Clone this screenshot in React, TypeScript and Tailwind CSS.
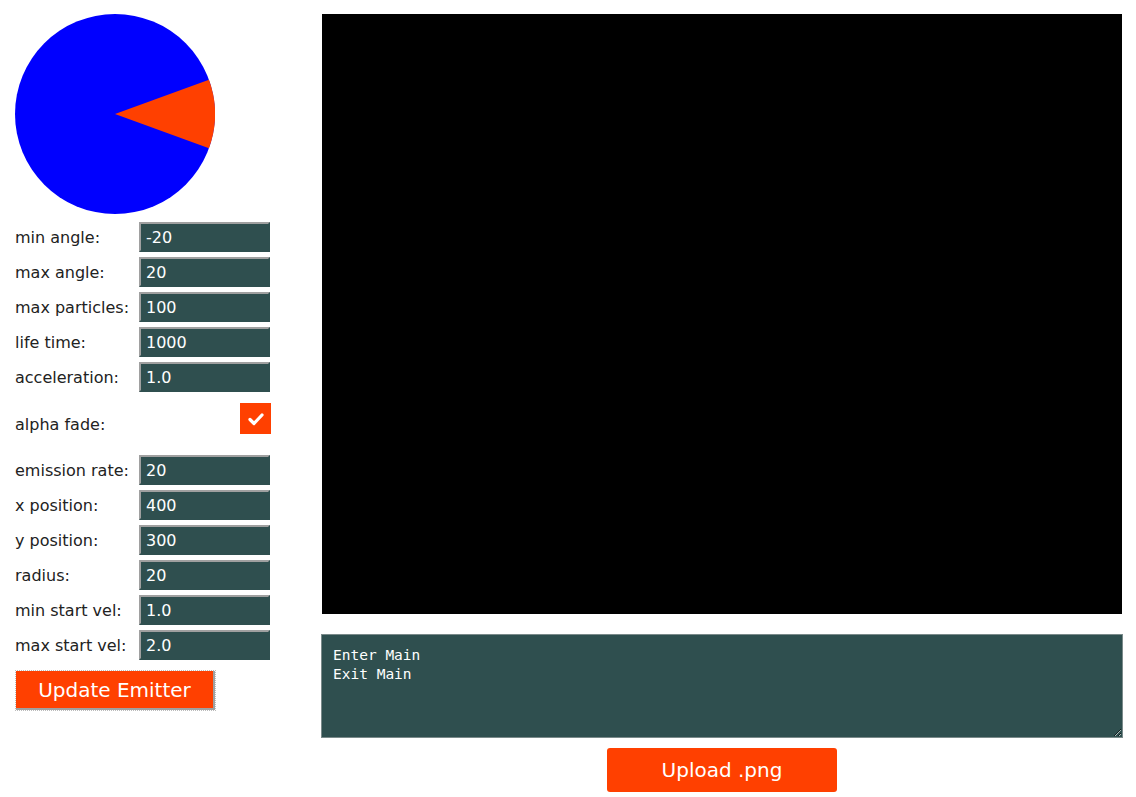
import React from 'react';

const font = { fontFamily: '"DejaVu Sans", Verdana, sans-serif' };

interface FieldProps {
  label: string;
  value: string;
}

function Field({ label, value }: FieldProps) {
  return (
    <div className="flex items-center h-[30px] mb-[5px]">
      <label className="w-[124px] pt-[2px] text-[16px] text-[#222]">{label}</label>
      <input
        className="w-[131px] h-[30px] pl-[5px] pt-px bg-[#2f4f4f] text-white text-[16px] border-2 border-t-[#a0a0a0] border-l-[#a0a0a0] border-r-[#2f4f4f] border-b-[#2f4f4f] outline-none"
        style={font}
        defaultValue={value}
      />
    </div>
  );
}

function Pie() {
  return (
    <svg width="200" height="200" viewBox="0 0 200 200">
      <circle cx="100" cy="100" r="100" fill="#0000ff" />
      <path d="M100 100 L193.97 65.8 A100 100 0 0 1 193.97 134.2 Z" fill="#ff4000" />
    </svg>
  );
}

export default function App() {
  return (
    <div className="flex pt-[14px] pl-[15px] bg-white min-h-[797px]" style={font}>
      <div className="w-[256px] flex flex-col">
        <Pie />
        <div className="mt-[8px]">
          <Field label="min angle:" value="-20" />
          <Field label="max angle:" value="20" />
          <Field label="max particles:" value="100" />
          <Field label="life time:" value="1000" />
          <Field label="acceleration:" value="1.0" />
          <div className="flex items-start mt-[11px] mb-[21px] h-[31px]">
            <label className="w-[225px] mt-[12px] text-[16px] leading-[20px] text-[#222]">alpha fade:</label>
            <div className="w-[31px] h-[31px] bg-[#ff4000] flex items-center justify-center">
              <svg width="16" height="14" viewBox="0 0 16 14">
                <path d="M2 7.5 L6 11.5 L14 3" stroke="white" strokeWidth="3.2" fill="none" strokeLinecap="round" strokeLinejoin="round" />
              </svg>
            </div>
          </div>
          <Field label="emission rate:" value="20" />
          <Field label="x position:" value="400" />
          <Field label="y position:" value="300" />
          <Field label="radius:" value="20" />
          <Field label="min start vel:" value="1.0" />
          <Field label="max start vel:" value="2.0" />
        </div>
        <button
          className="mt-[6px] ml-px w-[199px] h-[39px] bg-[#ff4000] text-white text-[20px] border-[#a0a0a0] border-r-2 border-b-2 outline-1 outline-dotted outline-[#bbb]"
          style={font}
        >
          Update Emitter
        </button>
      </div>
      <div className="ml-[50px] flex flex-col w-[802px]">
        <div className="ml-px w-[800px] h-[600px] bg-black" />
        <textarea
          className="mt-[20px] w-[802px] h-[104px] bg-[#2f4f4f] text-white border border-[#7a8a8a] px-[11px] pt-[11px] pb-[10px] text-[14.5px] leading-[19px] outline-none"
          style={{ fontFamily: '"DejaVu Sans Mono", monospace' }}
          defaultValue={'Enter Main\nExit Main'}
        />
        <div className="flex justify-center mt-[10px]">
          <button
            className="w-[230px] h-[44px] rounded-[3px] bg-[#ff4000] text-white text-[20px]"
            style={font}
          >
            Upload .png
          </button>
        </div>
      </div>
    </div>
  );
}
